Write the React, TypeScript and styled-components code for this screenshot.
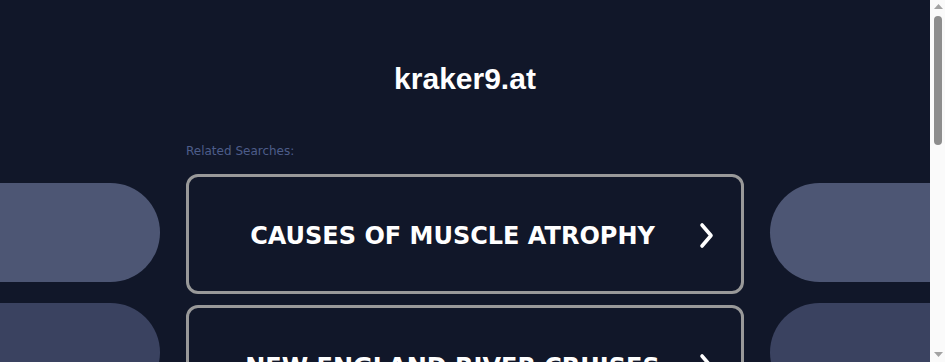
import React from "react";
import styled, { createGlobalStyle } from "styled-components";

const GlobalStyle = createGlobalStyle`
  html, body {
    margin: 0;
    padding: 0;
    background: #111729;
  }
  body {
    font-family: "DejaVu Sans", Verdana, sans-serif;
  }
`;

const Page = styled.div`
  min-height: 930px;
  padding-right: 15px;
  background: #111729;
  display: flex;
  flex-direction: column;
`;

const Title = styled.h1`
  margin: 62px 0 0;
  font-family: "Liberation Sans", Arial, sans-serif;
  font-weight: 700;
  font-size: 30px;
  line-height: 34px;
  color: #ffffff;
  text-align: center;
`;

const Layout = styled.div`
  display: grid;
  grid-template-columns: 160px 558px 160px;
  column-gap: 26px;
  justify-content: center;
  margin-top: 47px;
`;

const Side = styled.div`
  display: flex;
  flex-direction: column;
  gap: 21px;
  padding-top: 40px;
`;

const Pill = styled.div<{ $side: "left" | "right"; $shade: string }>`
  height: 99px;
  background: ${(p) => p.$shade};
  border-radius: ${(p) => (p.$side === "left" ? "0 50px 50px 0" : "50px 0 0 50px")};
`;

const Center = styled.div`
  display: flex;
  flex-direction: column;
`;

const Label = styled.div`
  font-family: "DejaVu Sans", Verdana, sans-serif;
  font-size: 12px;
  line-height: 14px;
  color: #4d5d8a;
  margin: 1px 0 16px;
`;

const List = styled.div`
  display: flex;
  flex-direction: column;
  gap: 11px;
`;

const Card = styled.a`
  box-sizing: border-box;
  height: 120px;
  border: 3px solid #999999;
  border-radius: 12px;
  display: flex;
  align-items: center;
  gap: 25px;
  padding: 4px 25px 0 44px;
  text-decoration: none;
  color: #ffffff;
`;

const CardText = styled.span`
  flex: 1;
  text-align: center;
  font-family: "DejaVu Sans", Verdana, sans-serif;
  font-weight: 700;
  font-size: 24px;
  white-space: nowrap;
  text-transform: uppercase;
`;

const Scrollbar = styled.div`
  position: fixed;
  top: 0;
  right: 0;
  width: 15px;
  height: 100vh;
  background: #fafafa;
  display: flex;
  flex-direction: column;
  align-items: center;
  justify-content: space-between;
  padding: 4px 0;
  box-sizing: border-box;
`;

const ScrollTrack = styled.div`
  flex: 1;
  width: 100%;
  display: flex;
  justify-content: center;
  padding-top: 6px;
`;

const Thumb = styled.div`
  width: 8px;
  height: 129px;
  border-radius: 4px;
  background: #8d8d8d;
  margin-left: 1px;
`;

const Arrow = ({ down }: { down?: boolean }) => (
  <svg width="9" height="6" viewBox="0 0 9 6" style={{ marginLeft: 1 }}>
    <polygon points={down ? "0,0 9,0 4.5,5" : "4.5,0 9,5 0,5"} fill="#a3a3a3" />
  </svg>
);

const Chevron = () => (
  <svg width="19" height="28" viewBox="0 0 19 28" fill="none">
    <polyline
      points="5,3 14,13.5 5,24"
      stroke="#ffffff"
      strokeWidth="3.6"
      strokeLinecap="round"
      strokeLinejoin="round"
    />
  </svg>
);

const items = [
  "Causes of Muscle Atrophy",
  "New England River Cruises",
  "Muscle Wasting Disease",
  "Causes of Muscle Weakness",
  "Dysphagia Treatment",
];

const shades = ["#4d5674", "#3a4260", "#2c3350", "#222a44", "#1b2139"];

export default function App() {
  return (
    <>
      <GlobalStyle />
      <Page>
        <Title>kraker9.at</Title>
        <Layout>
          <Side>
            {shades.map((s, i) => (
              <Pill key={i} $side="left" $shade={s} />
            ))}
          </Side>
          <Center>
            <Label>Related Searches:</Label>
            <List>
              {items.map((t) => (
                <Card key={t} href="#">
                  <CardText>{t}</CardText>
                  <Chevron />
                </Card>
              ))}
            </List>
          </Center>
          <Side>
            {shades.map((s, i) => (
              <Pill key={i} $side="right" $shade={s} />
            ))}
          </Side>
        </Layout>
      </Page>
      <Scrollbar aria-hidden>
        <Arrow />
        <ScrollTrack>
          <Thumb />
        </ScrollTrack>
        <Arrow down />
      </Scrollbar>
    </>
  );
}
